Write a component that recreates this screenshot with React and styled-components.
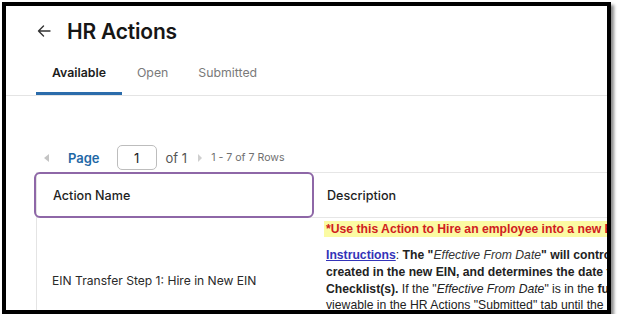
import React from 'react';
import styled, { createGlobalStyle } from 'styled-components';

const GlobalStyle = createGlobalStyle`
  body {
    margin: 0;
    background: #fff;
    font-family: Inter, "Noto Sans", sans-serif;
  }
`

const Frame = styled.div`
  box-sizing: border-box;
  width: 609px;
  height: 312px;
  margin: 2px 0 0 2px;
  border: 4px solid #000;
  box-shadow: 3px 3px 3px rgba(0,0,0,0.45);
  background: #fff;
  overflow: hidden;
  display: flex;
  flex-direction: column;
`
const Header = styled.div`
  height: 50px;
  flex: none;
  display: flex;
  align-items: center;
  gap: 16px;
  padding-left: 31px;
`
const Title = styled.h1`
  margin: 0;
  font-size: 21px;
  font-weight: 600;
  color: #161616;
  letter-spacing: -0.2px;
`
const Tabs = styled.div`
  flex: none;
  display: flex;
  height: 39px;
  padding-left: 30px;
  border-bottom: 1px solid #e4e4e4;
`
const Tab = styled.div`
  display: flex;
  align-items: center;
  padding: 0 15px 3px;
  font-size: 12.3px;
  font-weight: ${p => p.$active ? 600 : 400};
  color: ${p => p.$active ? '#1c1c1c' : '#7a7a7a'};
  border-bottom: 3px solid ${p => p.$active ? '#2b6cab' : 'transparent'};
  &:first-child {
    padding: 0 16px 3px;
  }
`
const Pager = styled.div`
  flex: none;
  display: flex;
  align-items: center;
  height: 25px;
  margin-top: 49px;
  padding-left: 38px;
  font-size: 13px;
  color: #4a4a4a;
`
const Caret = styled.span`
  width: 0;
  height: 0;
  border-top: ${p => p.$size}px solid transparent;
  border-bottom: ${p => p.$size}px solid transparent;
  ${p => p.$dir === 'left'
    ? `border-right: ${p.$size + 1}px solid #c4c4c4;`
    : `border-left: ${p.$size}px solid #cfcfcf;`}
`
const PageLabel = styled.span`
  margin-left: 19px;
  font-weight: 600;
  color: #1f68a6;
`
const PageInput = styled.div`
  box-sizing: border-box;
  margin-left: 17px;
  width: 40px;
  height: 25px;
  border: 1px solid #bdbdbd;
  border-radius: 5px;
  display: flex;
  align-items: center;
  justify-content: center;
  color: #222;
`
const OfText = styled.span`
  margin: 0 11px 0 9px;
  color: #555;
`
const RowsText = styled.span`
  margin-left: 9px;
  font-size: 10.6px;
  color: #707070;
`
const Table = styled.div`
  flex: 1;
  margin: 2px 0 0 30px;
  display: grid;
  grid-template-columns: 277px 1fr;
  grid-template-rows: 46px 122px;
  border-left: 1px solid #e4e4e4;
  min-height: 0;
`
const HeadCell = styled.div`
  position: relative;
  display: flex;
  align-items: center;
  padding-left: ${p => p.$pad}px;
  font-size: 12.6px;
  font-weight: 500;
  color: #1e1e1e;
  border-top: 1px solid #e6e6e6;
  border-bottom: 1px solid #e6e6e6;
  ${p => p.$highlight && `
    &::after {
      content: '';
      position: absolute;
      left: -3px;
      top: -1px;
      right: 0;
      bottom: -1px;
      border: 2px solid #8e67a7;
      border-radius: 6px;
    }
  `}
`
const NameCell = styled.div`
  display: flex;
  align-items: center;
  padding: 2px 0 0 15px;
  font-size: 12.1px;
  color: #2a2a2a;
`
const DescCell = styled.div`
  padding: 3px 0 0 10px;
  overflow: hidden;
  font-family: "Liberation Sans", Arial, sans-serif;
  font-size: 12.2px;
  color: #222;
`
const Notice = styled.div`
  white-space: nowrap;
  line-height: 16px;
  padding-left: 2px;
  background: #fbfba3;
  color: #d0201e;
  font-weight: bold;
`
const Para = styled.div`
  margin-top: 10px;
  padding-left: 2px;
`
const Line = styled.div`
  white-space: nowrap;
  line-height: 16.8px;
`
const Link = styled.span`
  color: #3333b8;
  text-decoration: underline;
  font-weight: bold;
`
const Term = styled.i`
  font-weight: normal;
  color: #333;
`

const BackArrow = () => (
  <svg width="14" height="12" viewBox="0 0 14 12" fill="none" stroke="#333" strokeWidth="1.4" strokeLinecap="round" strokeLinejoin="round">
    <path d="M13 6H1.5M6.5 1L1.5 6l5 5" />
  </svg>
)

const tabs = ['Available', 'Open', 'Submitted']

export default function App() {
  return (
    <>
      <GlobalStyle />
      <Frame>
        <Header>
          <BackArrow />
          <Title>HR Actions</Title>
        </Header>
        <Tabs>
          {tabs.map((t, i) => <Tab key={t} $active={i === 0}>{t}</Tab>)}
        </Tabs>
        <Pager>
          <Caret $dir="left" $size={4} />
          <PageLabel>Page</PageLabel>
          <PageInput>1</PageInput>
          <OfText>of 1</OfText>
          <Caret $dir="right" $size={4} />
          <RowsText>1 - 7 of 7 Rows</RowsText>
        </Pager>
        <Table>
          <HeadCell $pad={16} $highlight>Action Name</HeadCell>
          <HeadCell $pad={13}>Description</HeadCell>
          <NameCell>EIN Transfer Step 1: Hire in New EIN</NameCell>
          <DescCell>
            <Notice>*Use this Action to Hire an employee into a new EIN as part of an EIN transfer.</Notice>
            <Para>
              <Line><Link>Instructions</Link>: <b>The "<Term>Effective From Date</Term>" will control the hire date of the employee</b></Line>
              <Line><b>created in the new EIN, and determines the date the new hire tasks are assigned in the</b></Line>
              <Line><b>Checklist(s).</b> If the "<i>Effective From Date</i>" is in the <b>future</b>, the action will only be</Line>
              <Line>viewable in the HR Actions "Submitted" tab until the date is reached.</Line>
            </Para>
          </DescCell>
        </Table>
      </Frame>
    </>
  )
}
